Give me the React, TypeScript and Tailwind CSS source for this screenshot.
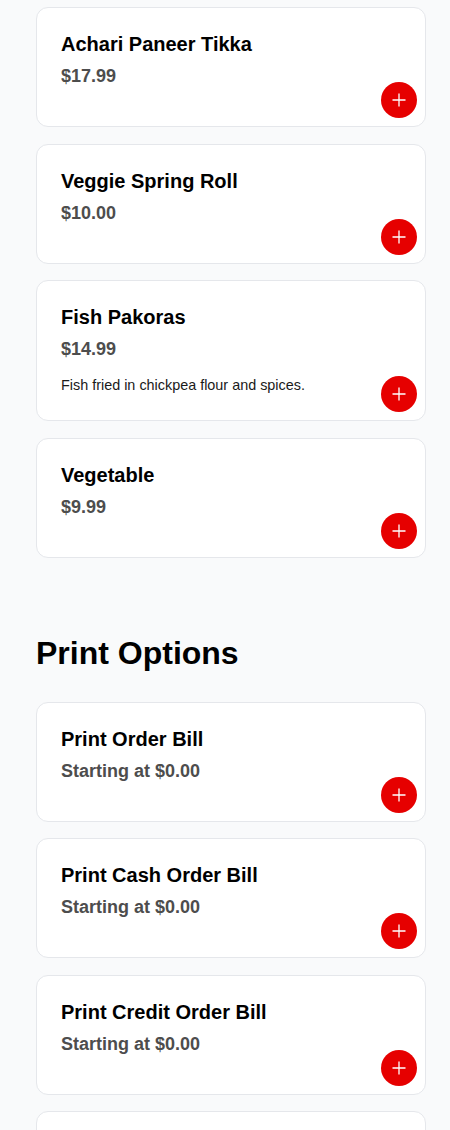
import React from 'react';

type Item = { name: string; price: string; description?: string };

const appetizers: Item[] = [
  { name: 'Achari Paneer Tikka', price: '$17.99' },
  { name: 'Veggie Spring Roll', price: '$10.00' },
  { name: 'Fish Pakoras', price: '$14.99', description: 'Fish fried in chickpea flour and spices.' },
  { name: 'Vegetable', price: '$9.99' },
];

const printOptions: Item[] = [
  { name: 'Print Order Bill', price: 'Starting at $0.00' },
  { name: 'Print Cash Order Bill', price: 'Starting at $0.00' },
  { name: 'Print Credit Order Bill', price: 'Starting at $0.00' },
  { name: 'Print Receipt', price: 'Starting at $0.00' },
];

const AddButton = () => (
  <button
    type="button"
    aria-label="Add"
    className="absolute right-2 bottom-2 flex h-9 w-9 items-center justify-center rounded-full bg-[#e60000]"
  >
    <svg width="14" height="14" viewBox="0 0 14 14" fill="none" stroke="white" strokeWidth="1.3">
      <path d="M7 0.5v13M0.5 7h13" />
    </svg>
  </button>
);

const MenuCard = ({ item }: { item: Item }) => (
  <div className="relative min-h-[120px] rounded-xl border border-[#e5e7eb] bg-white px-6 pt-6 pb-6">
    <h3 className="text-[20px] leading-[24px] font-bold text-black">{item.name}</h3>
    <p className="mt-2 text-[18px] leading-[24px] font-bold text-[#4d4d4d]">{item.price}</p>
    {item.description && (
      <p className="mt-[14px] text-[14.4px] leading-[21px] text-[#1a1a1a]">{item.description}</p>
    )}
    <AddButton />
  </div>
);

export default function App() {
  return (
    <div
      className="min-h-[1130px] bg-[#f9fafb] pt-[7px] pr-6 pl-9"
      style={{ fontFamily: '"Liberation Sans", Arial, sans-serif' }}
    >
      <div className="flex flex-col gap-[16.5px]">
        {appetizers.map((it) => (
          <MenuCard key={it.name} item={it} />
        ))}
      </div>

      <h2 className="mt-[76px] mb-[30px] text-[32px] leading-[38px] font-bold text-black">Print Options</h2>

      <div className="flex flex-col gap-[16.5px]">
        {printOptions.map((it) => (
          <MenuCard key={it.name} item={it} />
        ))}
      </div>
    </div>
  );
}
